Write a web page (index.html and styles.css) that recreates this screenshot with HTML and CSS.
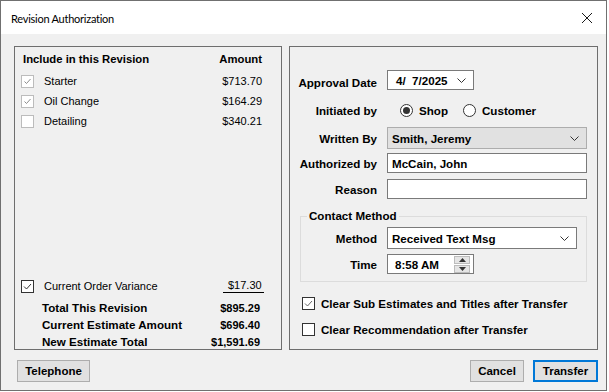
FILE: index.html
```html
<!DOCTYPE html>
<html lang="en">
<head>
  <meta charset="UTF-8" />
  <title>Revision Authorization</title>
  <link rel="stylesheet" href="styles.css">
</head>
<body>

<div class="dialog">
  <header class="titlebar">
    <span class="title">Revision Authorization</span>
    <svg class="close" width="12" height="12" viewBox="0 0 12 12">
      <path d="M1 1L11 11M11 1L1 11" stroke="#1a1a1a" stroke-width="1" fill="none" />
    </svg>
  </header>

  <div class="dialog-body">
    <div class="panels">

      <section class="panel items">
        <div class="items-head">
          <span>Include in this Revision</span>
          <span>Amount</span>
        </div>

        <div class="item">
          <span class="check disabled"><svg viewBox="0 0 11 11"><path d="M2.5 5.5l2 2 4-4.5" /></svg></span>
          <span class="item-name">Starter</span>
          <span class="item-amt">$713.70</span>
        </div>
        <div class="item">
          <span class="check disabled"><svg viewBox="0 0 11 11"><path d="M2.5 5.5l2 2 4-4.5" /></svg></span>
          <span class="item-name">Oil Change</span>
          <span class="item-amt">$164.29</span>
        </div>
        <div class="item">
          <span class="check disabled"></span>
          <span class="item-name">Detailing</span>
          <span class="item-amt">$340.21</span>
        </div>

        <div class="items-foot">
          <div class="item variance">
            <span class="check"><svg viewBox="0 0 11 11"><path d="M2 5.5l2.5 2.5 4.5-5" /></svg></span>
            <span class="item-name">Current Order Variance</span>
            <span class="item-amt"><span class="underline">$17.30</span></span>
          </div>
          <div class="total"><span class="total-label">Total This Revision</span><span>$895.29</span></div>
          <div class="total"><span class="total-label">Current Estimate Amount</span><span>$696.40</span></div>
          <div class="total"><span class="total-label">New Estimate Total</span><span>$1,591.69</span></div>
        </div>
      </section>

      <section class="panel auth">
        <div class="row r-date">
          <label>Approval Date</label>
          <div class="combo date">
            <span>4/&nbsp; 7/2025</span>
            <svg class="chev" width="9" height="5" viewBox="0 0 9 5"><path d="M0.5 0.5l4 4 4-4" /></svg>
          </div>
        </div>

        <div class="row r-init">
          <label>Initiated by</label>
          <div class="radios">
            <span class="radio on"></span><span class="radio-text">Shop</span>
            <span class="radio"></span><span class="radio-text">Customer</span>
          </div>
        </div>

        <div class="row r-written">
          <label>Written By</label>
          <div class="combo grey">
            <span>Smith, Jeremy</span>
            <svg class="chev" width="9" height="5" viewBox="0 0 9 5"><path d="M0.5 0.5l4 4 4-4" /></svg>
          </div>
        </div>

        <div class="row r-auth">
          <label>Authorized by</label>
          <div class="text-box">McCain, John</div>
        </div>

        <div class="row r-reason">
          <label>Reason</label>
          <div class="text-box"></div>
        </div>

        <fieldset class="contact">
          <legend>Contact Method</legend>
          <div class="row r-method">
            <label>Method</label>
            <div class="combo">
              <span>Received Text Msg</span>
              <svg class="chev" width="9" height="5" viewBox="0 0 9 5"><path d="M0.5 0.5l4 4 4-4" /></svg>
            </div>
          </div>
          <div class="row r-time">
            <label>Time</label>
            <div class="time-box">
              <span>8:58 AM</span>
              <span class="spin">
                <span class="spin-btn"><svg width="7" height="4" viewBox="0 0 7 4"><path d="M0 4L3.5 0L7 4Z" /></svg></span>
                <span class="spin-btn"><svg width="7" height="4" viewBox="0 0 7 4"><path d="M0 0L3.5 4L7 0Z" /></svg></span>
              </span>
            </div>
          </div>
        </fieldset>

        <div class="option opt-sub">
          <span class="check"><svg viewBox="0 0 11 11"><path d="M2 5.5l2.5 2.5 4.5-5" /></svg></span>
          <span>Clear Sub Estimates and Titles after Transfer</span>
        </div>
        <div class="option">
          <span class="check"></span>
          <span>Clear Recommendation after Transfer</span>
        </div>
      </section>

    </div>

    <footer class="buttons">
      <button class="btn tel">Telephone</button>
      <span class="grow"></span>
      <button class="btn cancel">Cancel</button>
      <button class="btn transfer">Transfer</button>
    </footer>
  </div>
</div>

</body>
</html>
```

FILE: styles.css
```css
body {
  margin: 0;
  background: #ffffff;
  font-family: 'Liberation Sans', Arial, sans-serif;
  font-size: 11px;
  color: #000;
}

.dialog {
  width: 605px;
  height: 389px;
  border: 1px solid #707070;
  background: #f0f0f0;
  display: flex;
  flex-direction: column;
}

.titlebar {
  height: 33px;
  background: #fff;
  display: flex;
  align-items: center;
  justify-content: space-between;
  padding: 0 13px 0 10px;
}

.title {
  font-family: 'Lato', 'Noto Sans', sans-serif;
  font-size: 11px;
  letter-spacing: -0.25px;
  margin-top: 1px;
}

.dialog-body {
  flex: 1;
  padding: 12px 8px 0 13px;
}

.panels {
  display: flex;
  gap: 7px;
  height: 304px;
}

.panel {
  border: 1px solid #6e6e6e;
  box-sizing: border-box;
}

/* left: items list */
.items {
  width: 268px;
  display: flex;
  flex-direction: column;
  padding: 5px 19px 0 6px;
}

.items-head {
  display: flex;
  justify-content: space-between;
  font-weight: bold;
  font-size: 11.3px;
  line-height: 14px;
  padding-left: 2px;
  margin-bottom: 5px;
}

.item {
  display: flex;
  align-items: center;
  height: 20px;
}

.item-name {
  flex: 1;
  margin-left: 10px;
}

.check {
  width: 13px;
  height: 13px;
  box-sizing: border-box;
  border: 1px solid #333;
  background: #fff;
  display: flex;
  align-items: center;
  justify-content: center;
  flex-shrink: 0;
}

.check svg {
  width: 11px;
  height: 11px;
  fill: none;
  stroke: #333;
  stroke-width: 1;
}

.check.disabled {
  border-color: #bcbcbc;
}

.check.disabled svg {
  stroke: #8d8d8d;
}

.items-foot {
  margin-top: auto;
}

.variance .underline {
  display: inline-block;
  width: 36px;
  padding: 0 0 0 5px;
  margin-right: -2px;
  line-height: 13px;
  border-bottom: 1px solid #000;
}

.total {
  display: flex;
  justify-content: space-between;
  font-weight: bold;
  line-height: 14px;
  margin-top: 3px;
  padding: 0 2px 0 21px;
}

.total-label {
  font-size: 11.6px;
}

.variance + .total {
  margin-top: 5px;
}

/* right: authorization form */
.auth {
  flex: 1;
  padding: 0 10px 0 0;
  font-weight: bold;
  font-size: 11.6px;
}

.row {
  display: flex;
  align-items: center;
}

.row label {
  width: 87px;
  text-align: right;
  margin-right: 10px;
  flex-shrink: 0;
}

.r-date { margin-top: 23px; height: 20px; }
.r-date label { margin-top: 4px; }
.r-init { margin-top: 10px; height: 20px; }
.r-written { margin-top: 7px; height: 22px; }
.r-auth { margin-top: 4px; height: 20px; }
.r-reason { margin-top: 6px; height: 20px; }

.combo,
.text-box,
.time-box {
  height: 100%;
  box-sizing: border-box;
  border: 1px solid #7a7a7a;
  background: #fff;
  display: flex;
  align-items: center;
  padding-left: 4px;
}

.combo {
  justify-content: space-between;
  padding-right: 7px;
  flex: 1;
}

.combo.grey {
  background: #e1e1e1;
  border-color: #adadad;
}

.date {
  flex: 0 0 87px;
  padding-left: 8px;
}

.chev {
  fill: none;
  stroke: #333;
  stroke-width: 1;
}

.text-box {
  flex: 1;
}

.radios {
  display: flex;
  align-items: center;
  margin-left: 13px;
}

.radio {
  width: 13px;
  height: 13px;
  box-sizing: border-box;
  border: 1px solid #333;
  border-radius: 50%;
  background: #fff;
  display: flex;
  align-items: center;
  justify-content: center;
}

.radio.on::after {
  content: "";
  width: 7px;
  height: 7px;
  border-radius: 50%;
  background: #333;
}

.radio-text {
  margin: 0 15px 0 6px;
}

.contact {
  margin: 10px 0 0 10px;
  padding: 4px 9px 7px 0;
  border: 1px solid #dcdcdc;
}

.contact legend {
  padding: 0 2px;
  margin-left: 6px;
  line-height: 14px;
}

.contact .row label {
  width: 76px;
}

.r-method { height: 22px; }
.r-time { margin-top: 5px; height: 20px; }

.time-box {
  width: 87px;
  padding: 0 3px 0 7px;
  justify-content: space-between;
}

.spin {
  display: flex;
  flex-direction: column;
  gap: 1px;
}

.spin-btn {
  width: 14px;
  height: 6px;
  background: #e5e5e5;
  border: 1px solid #bcbcbc;
  display: flex;
  align-items: center;
  justify-content: center;
}

.spin-btn svg {
  fill: #333;
}

.option {
  display: flex;
  align-items: center;
  gap: 6px;
  margin-left: 12px;
  height: 14px;
  margin-top: 12px;
}

.opt-sub {
  margin-top: 14px;
}

.opt-sub .check svg {
  stroke: #666;
}

/* bottom buttons */
.buttons {
  display: flex;
  gap: 9px;
  margin-top: 10px;
}

.btn {
  font: bold 11.5px 'Liberation Sans', Arial, sans-serif;
  height: 22px;
  background: #e1e1e1;
  border: 1px solid #adadad;
  padding: 0;
  color: #000;
}

.tel {
  width: 73px;
  margin-left: 3px;
}

.grow {
  flex: 1;
}

.cancel {
  width: 54px;
}

.transfer {
  width: 65px;
  border: 2px solid #0078d7;
}
```
